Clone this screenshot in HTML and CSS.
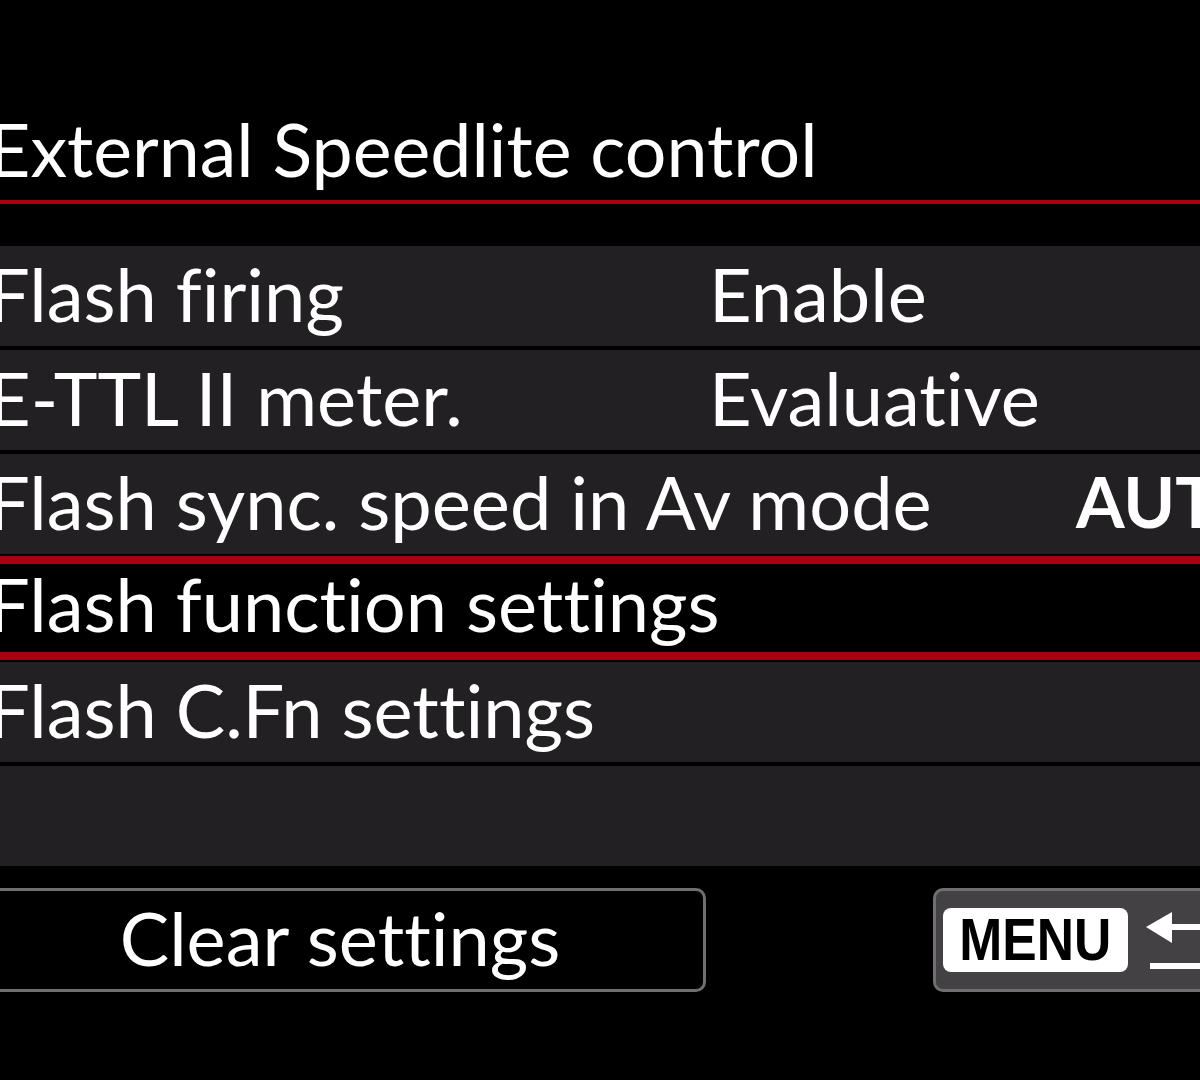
FILE: index.html
```html
<!DOCTYPE html>
<html lang="en">
<head>
  <meta charset="UTF-8">
  <title>External Speedlite control</title>
  <link rel="stylesheet" href="styles.css">
</head>
<body>
  <div class="screen">
    <!-- page title -->
    <h1 class="title">External Speedlite control</h1>

    <!-- settings list -->
    <ul class="menu">
      <li class="item"><span class="label">Flash firing</span><span class="value">Enable</span></li>
      <li class="item"><span class="label">E-TTL II meter.</span><span class="value">Evaluative</span></li>
      <li class="item item-wide"><span class="label">Flash sync. speed in Av mode</span><span class="value value-bold">AUTO</span></li>
      <li class="item selected"><span class="label">Flash function settings</span></li>
      <li class="item"><span class="label">Flash C.Fn settings</span></li>
      <li class="item"></li>
    </ul>

    <!-- bottom buttons -->
    <div class="buttons">
      <div class="btn btn-clear">Clear settings</div>
      <div class="btn btn-back">
        <span class="key"><span class="key-text">MENU</span></span>
        <svg class="return-icon" width="80" height="70" viewBox="0 0 80 70">
          <polygon points="0,22 26,7 26,38" fill="#fff"/>
          <path d="M24 22 H58 A19.5 19.5 0 0 1 58 61 H4" fill="none" stroke="#fff" stroke-width="6"/>
        </svg>
      </div>
    </div>
  </div>
</body>
</html>
```

FILE: styles.css
```css
html, body {
  margin: 0;
  background: #000;
  overflow: hidden;
}
body {
  font-family: Lato, 'Open Sans', sans-serif;
  font-variant-ligatures: none;
  color: #fff;
  width: 1200px;
  height: 1080px;
}
.screen {
  margin-left: -12px;
  width: 1300px;
}
.title {
  margin: 0;
  font-weight: normal;
  font-size: 73.5px;
  line-height: 80px;
  padding: 109px 0 11px 0;
  border-bottom: 4px solid #a8000f;
}
.menu {
  list-style: none;
  margin: 42px 0 0 0;
  padding: 0;
}
.item {
  display: grid;
  grid-template-columns: 721px 1fr;
  height: 100px;
  box-sizing: border-box;
  background: #222022;
  margin-bottom: 4px;
  font-size: 74px;
  line-height: 95px;
  white-space: nowrap;
}
.item-wide {
  grid-template-columns: 1088px 1fr;
}
.value-bold {
  font-weight: bold;
  font-size: 70px;
}
/* selected row: black with red lines */
.item.selected {
  background: #000;
  height: 104px;
  margin: -2px 0 2px 0;
  border-top: 8px solid #a8000f;
  border-bottom: 8px solid #a8000f;
  line-height: 79px;
}
.buttons {
  display: flex;
  margin-top: 22px;
  gap: 227px;
}
.btn {
  height: 104px;
  box-sizing: border-box;
  border: 3px solid #6f6f6f;
  border-radius: 10px;
}
.btn-clear {
  margin-left: -14px;
  width: 732px;
  text-align: center;
  font-size: 74px;
  line-height: 94px;
}
.btn-back {
  width: 320px;
  background: #434143;
  display: flex;
  align-items: flex-start;
  padding: 17px 0 0 7px;
  gap: 18px;
}
.key {
  display: flex;
  justify-content: center;
  width: 185px;
  height: 64px;
  background: #fff;
  border-radius: 8px;
  color: #000;
  font-family: 'Liberation Sans', Arial, sans-serif;
  font-weight: bold;
  font-size: 60px;
  line-height: 64px;
}
.key-text {
  display: inline-block;
  transform: scaleX(0.86);
}
.return-icon {
  display: block;
  margin-top: -3px;
}
```
